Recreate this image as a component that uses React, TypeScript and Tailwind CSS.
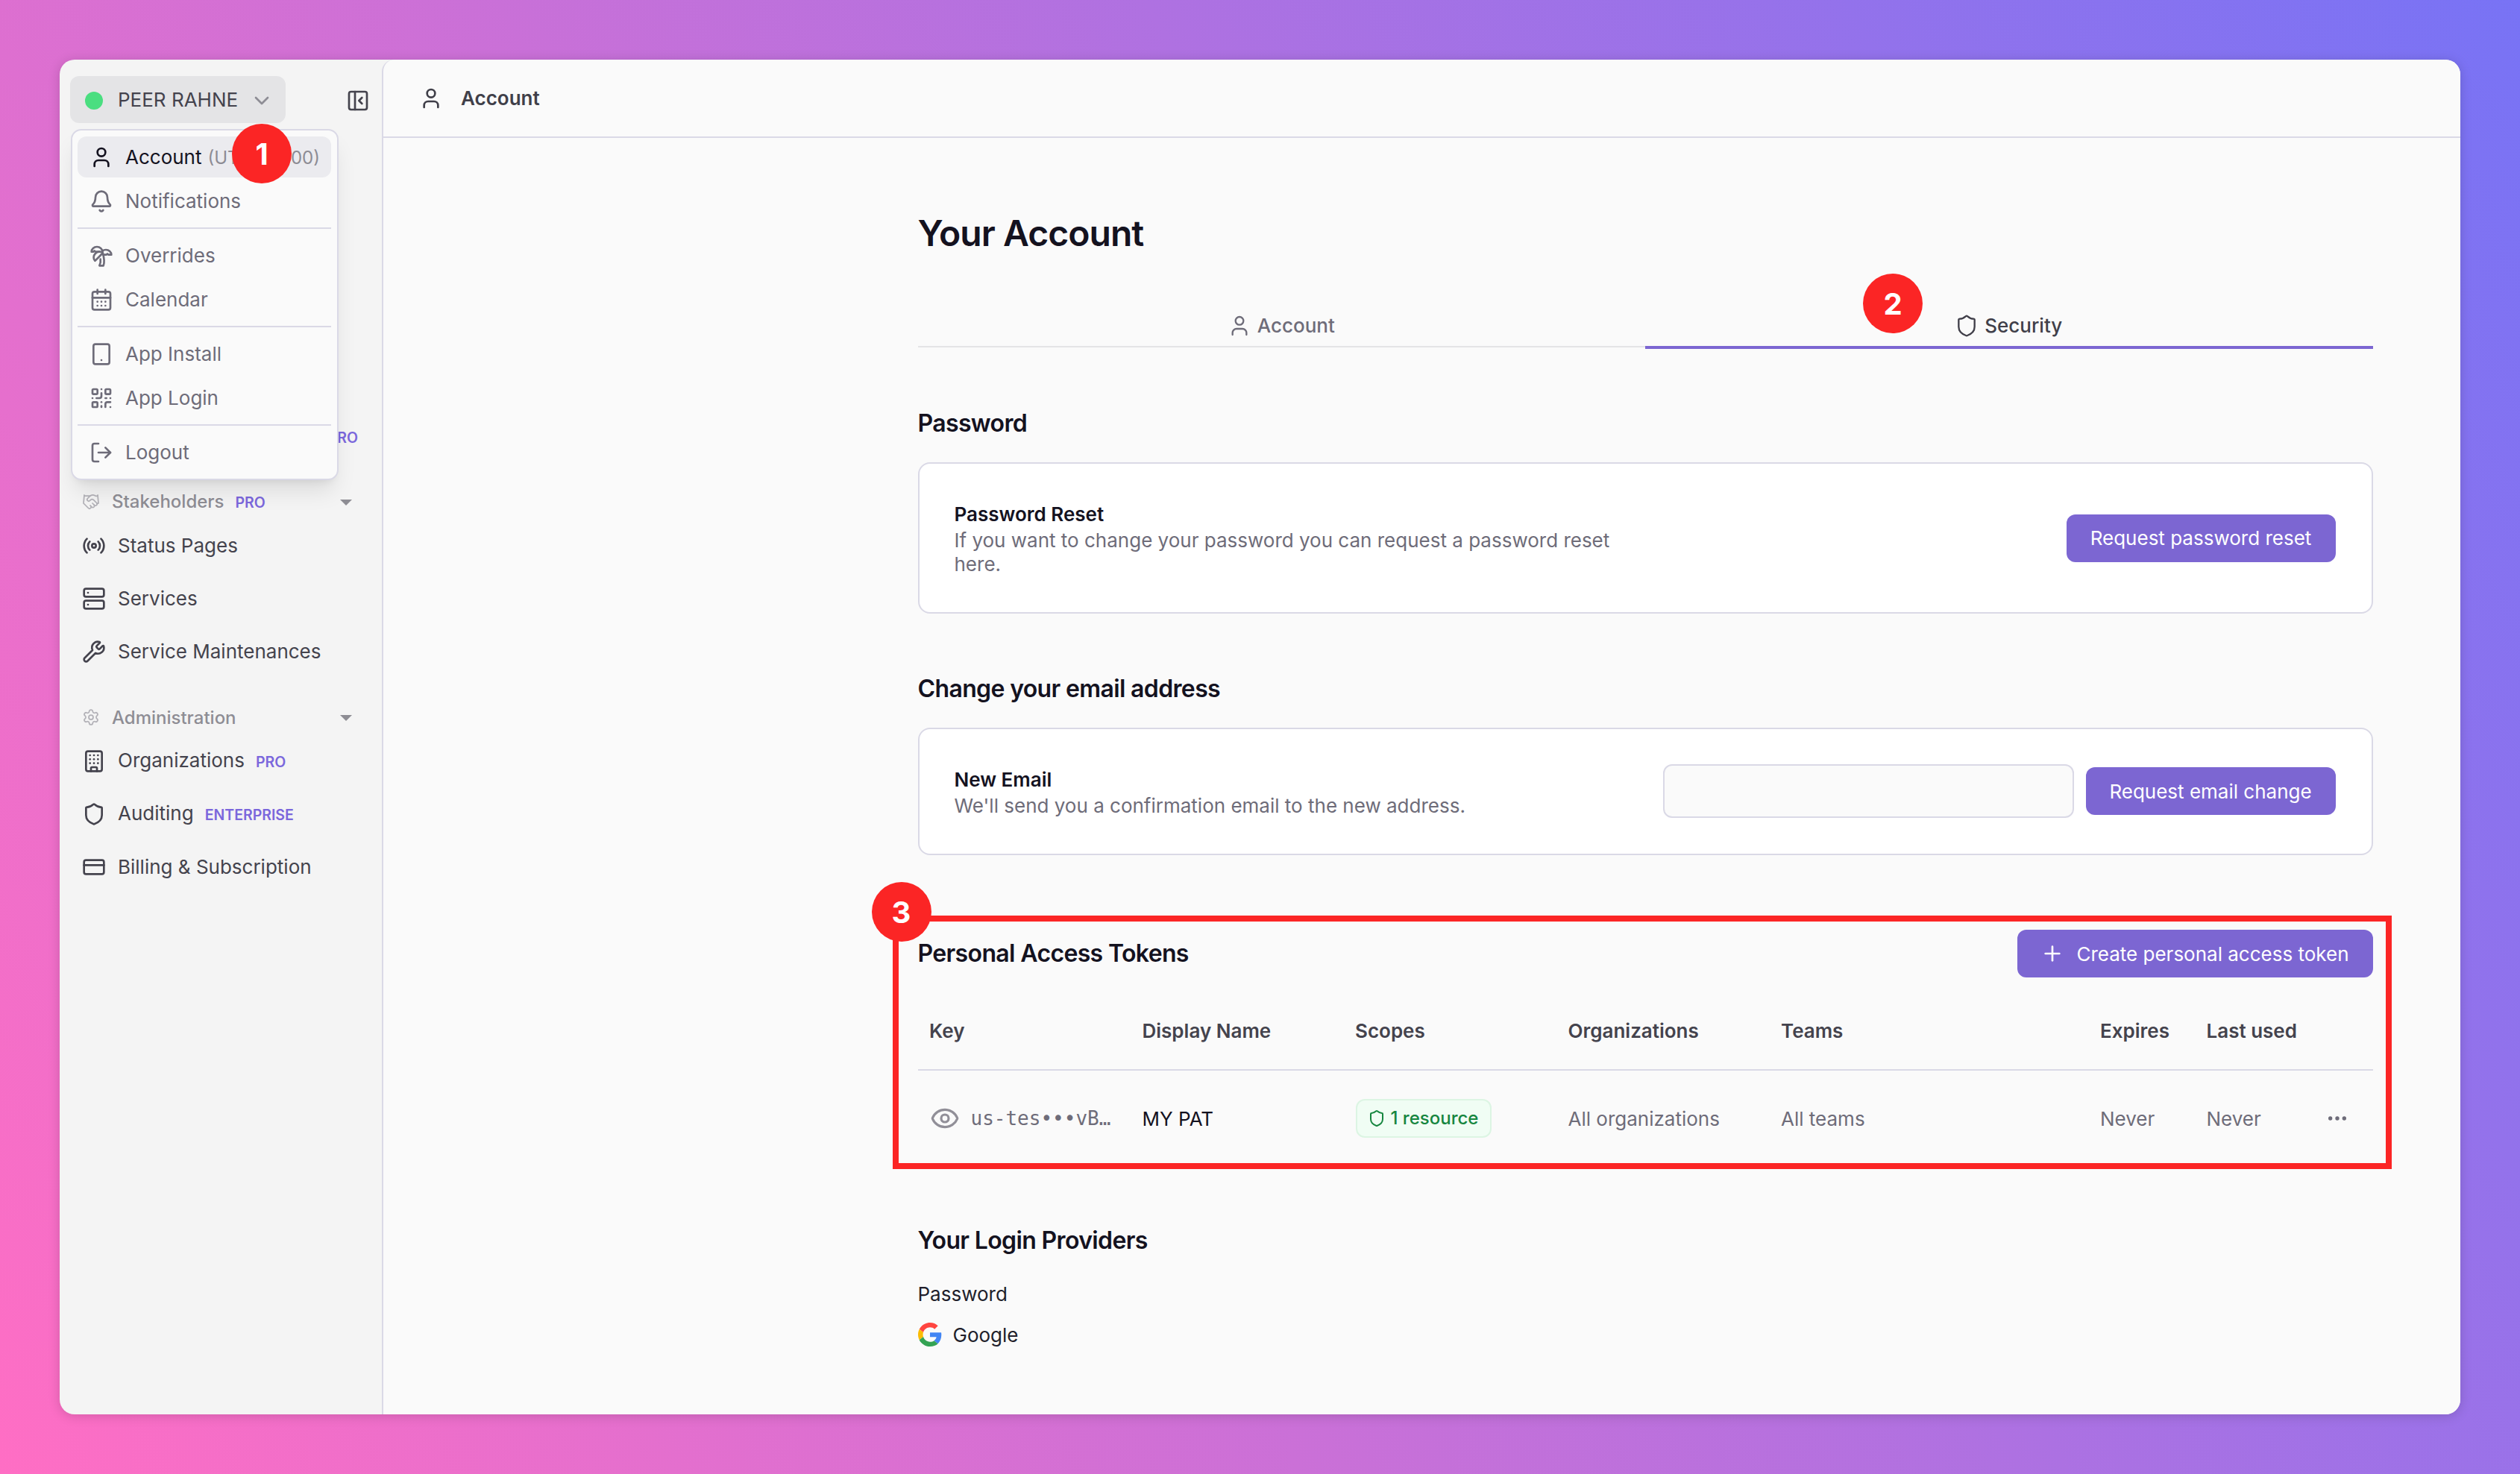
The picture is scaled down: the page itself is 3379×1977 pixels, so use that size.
import React from "react";
import {
  Bell,
  Building,
  CalendarDays,
  ChevronDown,
  CreditCard,
  Ellipsis,
  Eye,
  Handshake,
  LogOut,
  PanelLeftClose,
  Plus,
  QrCode,
  Radio,
  Server,
  Settings,
  Shield,
  Tablet,
  TreePalm,
  User,
  Wrench,
  type LucideIcon,
} from "lucide-react";

const STROKE = 2;

function Step({ n, className }: { n: number; className: string }) {
  return (
    <div
      className={`absolute z-30 flex size-20 items-center justify-center rounded-full bg-[#fb2525] pt-[2px] text-[40px] leading-none font-bold text-white ${className}`}
    >
      {n}
    </div>
  );
}

function Tag({ children }: { children: string }) {
  return <span className="ml-[15px] text-[19.5px] font-semibold text-[#7b67dc]">{children}</span>;
}

function MenuItem({ icon: Icon, label, hint, active }: { icon: LucideIcon; label: string; hint?: string; active?: boolean }) {
  return (
    <div
      className={`flex h-[55px] items-center gap-4 rounded-[12px] px-4 ${active ? "bg-[#ebebef] text-[#14121f]" : "text-[#6e6c79]"}`}
    >
      <Icon size={32} strokeWidth={STROKE} className="shrink-0" />
      <div className="flex items-baseline pt-[2px] whitespace-nowrap">
        <span>{label}</span>
        {hint && <span className="ml-[8px] text-[24px] text-[#8d8c94]">{hint}</span>}
      </div>
    </div>
  );
}

function MenuRule() {
  return <div className="my-1 h-[2px] bg-[#dad9e6]" />;
}

function UserMenu() {
  return (
    <div className="absolute top-[71px] left-px z-20 flex w-[359px] flex-col gap-1 rounded-[14px] border-2 border-[#dad9e6] bg-[#fafafa] py-2 pr-2 pl-[7px] shadow-[0_20px_30px_-6px_rgba(0,0,0,0.1),0_8px_12px_-8px_rgba(0,0,0,0.1)]">
      <MenuItem icon={User} label="Account" hint="(UTC+02:00)" active />
      <MenuItem icon={Bell} label="Notifications" />
      <MenuRule />
      <MenuItem icon={TreePalm} label="Overrides" />
      <MenuItem icon={CalendarDays} label="Calendar" />
      <MenuRule />
      <MenuItem icon={Tablet} label="App Install" />
      <MenuItem icon={QrCode} label="App Login" />
      <MenuRule />
      <MenuItem icon={LogOut} label="Logout" />
    </div>
  );
}

function NavGroup({ icon: Icon, label, tag }: { icon: LucideIcon; label: string; tag?: string }) {
  return (
    <div className="flex h-[46px] items-center pr-[40px] pl-[30px] text-[#8e8d94]">
      <Icon size={24} strokeWidth={1.75} className="mr-4 text-[#b3b2b8]" />
      <div className="flex items-baseline pt-[2px]">
        <span className="text-[24px] font-medium">{label}</span>
        {tag && <Tag>{tag}</Tag>}
      </div>
      <div className="mt-px ml-auto h-0 w-0 border-x-[8px] border-t-[8px] border-x-transparent border-t-[#8e8d94]" />
    </div>
  );
}

function NavItem({ icon: Icon, label, tag }: { icon: LucideIcon; label: string; tag?: string }) {
  return (
    <div className="flex h-[71px] items-center gap-4 pl-[30px] text-[#44434d]">
      <Icon size={32} strokeWidth={STROKE} />
      <div className="flex items-baseline pt-[2px]">
        <span>{label}</span>
        {tag && <Tag>{tag}</Tag>}
      </div>
    </div>
  );
}

function Sidebar() {
  return (
    <aside className="flex w-[432px] shrink-0 flex-col pt-[22px]">
      <div className="flex items-center justify-between pr-4 pl-[14px]">
        <div className="relative">
          <div className="flex h-[63px] w-[289px] items-center justify-between rounded-[12px] bg-[#e4e4e6] px-4 text-[#44434d]">
            <div className="flex items-center gap-[20px] pl-1">
              <span className="mt-[3px] size-6 rounded-full bg-[#4ade80]" />
              <span className="pt-[2px]">PEER RAHNE</span>
            </div>
            <ChevronDown size={32} strokeWidth={STROKE} className="mt-[2px] text-[#8e8d95]" />
          </div>
          <UserMenu />
          <Step n={1} className="top-[64px] left-[217px]" />
        </div>
        <PanelLeftClose size={32} strokeWidth={STROKE} className="mt-[2px] text-[#44434d]" />
      </div>

      <nav className="mt-[386px] flex flex-col">
        <div className="mb-[28px] flex h-[71px] items-center justify-end pt-[2px] pr-[32px]">
          <Tag>PRO</Tag>
        </div>
        <NavGroup icon={Handshake} label="Stakeholders" tag="PRO" />
        <NavItem icon={Radio} label="Status Pages" />
        <NavItem icon={Server} label="Services" />
        <NavItem icon={Wrench} label="Service Maintenances" />
        <div className="h-[30px]" />
        <NavGroup icon={Settings} label="Administration" />
        <NavItem icon={Building} label="Organizations" tag="PRO" />
        <NavItem icon={Shield} label="Auditing" tag="ENTERPRISE" />
        <NavItem icon={CreditCard} label="Billing & Subscription" />
      </nav>
    </aside>
  );
}

function Heading({ children, className = "" }: { children: string; className?: string }) {
  return (
    <h2 className={`text-[32px] leading-[40px] font-semibold tracking-[-0.02em] text-[#14121f] ${className}`}>{children}</h2>
  );
}

function Button({ children, className }: { children: React.ReactNode; className: string }) {
  return (
    <button
      className={`flex h-16 shrink-0 items-center justify-center gap-4 rounded-[12px] bg-[#7c66d2] whitespace-nowrap text-white ${className}`}
    >
      {children}
    </button>
  );
}

function Card({ title, text, children, className }: { title: string; text: string; children: React.ReactNode; className: string }) {
  return (
    <div className={`flex items-center justify-between rounded-[16px] border-2 border-[#dad9e6] bg-white pr-12 pl-[47px] ${className}`}>
      <div className="flex w-[900px] flex-col gap-[2px] pt-[5px] leading-[32.5px]">
        <span className="font-semibold text-[#14121f]">{title}</span>
        <span className="text-[#6e6c79]">{text}</span>
      </div>
      <div className="flex items-center gap-4">{children}</div>
    </div>
  );
}

const COLS = "grid grid-cols-[285.5px_285.5px_285.5px_285.5px_428px_142.5px_1fr_96px] items-center";

function Tokens() {
  return (
    <section className="relative mt-[100px] flex flex-col">
      <div className="flex h-16 items-center justify-between">
        <Heading>Personal Access Tokens</Heading>
        <Button className="w-[477px]">
          <Plus size={32} strokeWidth={STROKE} />
          <span className="pt-[2px]">Create personal access token</span>
        </Button>
      </div>
      <div className={`mt-[21px] h-[104px] border-b-2 border-[#dad9e6] font-semibold text-[#44434d] ${COLS} *:pl-[15.5px]`}>
        <span>Key</span>
        <span>Display Name</span>
        <span>Scopes</span>
        <span>Organizations</span>
        <span>Teams</span>
        <span>Expires</span>
        <span>Last used</span>
        <span />
      </div>
      <div className={`h-[128px] text-[#6e6c79] ${COLS}`}>
        <div className="flex items-center gap-[15px] pl-4">
          <Eye size={40} strokeWidth={1.9} className="shrink-0 text-[#918f98]" />
          <span className="whitespace-nowrap font-['DejaVu_Sans_Mono',monospace]">us-tes•••vB…</span>
        </div>
        <span className="pt-[2px] pl-[15.5px] text-[#14121f]">MY PAT</span>
        <div className="pl-4">
          <div className="flex h-[52px] w-[182px] items-center gap-[7px] rounded-[12px] border-2 border-[#dcf5e3] bg-[#f0fdf4] pl-[14px] text-[24px] font-medium whitespace-nowrap text-[#16863f]">
            <Shield size={24} strokeWidth={STROKE} className="shrink-0" />
            <span>1 resource</span>
          </div>
        </div>
        <span className="pt-[2px] pl-[15.5px]">All organizations</span>
        <span className="pt-[2px] pl-[15.5px]">All teams</span>
        <span className="pt-[2px] pl-[15.5px]">Never</span>
        <span className="pt-[2px] pl-[15.5px]">Never</span>
        <Ellipsis size={32} strokeWidth={2} className="justify-self-center" />
      </div>
      <div className="absolute -top-[19px] -right-[25px] -bottom-[4px] -left-[34px] z-20 border-8 border-[#fb2525]" />
      <Step n={3} className="-top-[64px] -left-[62px]" />
    </section>
  );
}

function GoogleLogo() {
  return (
    <svg viewBox="0 0 48 48" className="size-8">
      <path fill="#ff4540" d="M24 9.5c3.54 0 6.71 1.22 9.21 3.6l6.85-6.85C35.9 2.38 30.47 0 24 0 14.62 0 6.51 5.38 2.56 13.22l7.98 6.19C12.43 13.72 17.74 9.5 24 9.5z" />
      <path fill="#4285f4" d="M46.98 24.55c0-1.57-.15-3.09-.38-4.55H24v9.02h12.94c-.58 2.96-2.26 5.48-4.78 7.18l7.73 6c4.51-4.18 7.09-10.36 7.09-17.65z" />
      <path fill="#fbbc05" d="M10.53 28.59c-.48-1.45-.76-2.99-.76-4.59s.27-3.14.76-4.59l-7.98-6.19C.92 16.46 0 20.12 0 24c0 3.88.92 7.54 2.56 10.78l7.97-6.19z" />
      <path fill="#34a353" d="M24 48c6.48 0 11.93-2.13 15.89-5.81l-7.73-6c-2.15 1.45-4.92 2.3-8.16 2.3-6.26 0-11.57-4.22-13.47-9.91l-7.98 6.19C6.51 42.62 14.62 48 24 48z" />
    </svg>
  );
}

function Page() {
  return (
    <main className="flex grow flex-col overflow-hidden rounded-tl-[16px] border-l-2 border-[#dad9e6] bg-[#fafafa]">
      <header className="flex h-[105px] shrink-0 items-center gap-6 border-b-2 border-[#dad9e6] pl-12 font-semibold text-[#403f49]">
        <User size={32} strokeWidth={STROKE} />
        <span className="pt-[2px]">Account</span>
      </header>
      <div className="ml-[716.5px] flex w-[1951px] flex-col pt-[99.5px]">
        <h1 className="text-[48px] leading-[56px] font-semibold tracking-[-0.02em] text-[#14121f]">Your Account</h1>

        <div className="mt-[68.5px] grid h-[59px] grid-cols-2 items-start">
          <div className="flex h-[57px] items-center justify-center gap-[8px] border-b-2 border-[#e4e4e6] pr-px font-medium text-[#6e6c79]">
            <User size={32} strokeWidth={1.75} />
            <span className="pt-[2px]">Account</span>
          </div>
          <div className="relative flex h-[59px] items-center justify-center gap-[8px] border-b-4 border-[#7c66d2] pr-px font-medium text-[#403f49]">
            <Shield size={32} strokeWidth={1.75} />
            <span className="pt-[2px]">Security</span>
            <Step n={2} className="-top-[42px] left-[292px]" />
          </div>
        </div>

        <Heading className="mt-[79.5px] mb-[32.5px]">Password</Heading>
        <Card
          title="Password Reset"
          text="If you want to change your password you can request a password reset here."
          className="h-[203px]"
        >
          <Button className="w-[361px]">
            <span className="pt-[2px]">Request password reset</span>
          </Button>
        </Card>

        <Heading className="mt-[81px] mb-[31.5px]">Change your email address</Heading>
        <Card title="New Email" text="We'll send you a confirmation email to the new address." className="h-[171.5px]">
          <input className="h-[72px] w-[551px] rounded-[12px] border-2 border-[#dad9e6] bg-[#fafafa]" />
          <Button className="w-[335px]">
            <span className="pt-[2px]">Request email change</span>
          </Button>
        </Card>

        <Tokens />

        <Heading className="mt-[79.5px]">Your Login Providers</Heading>
        <div className="mt-[31.5px] flex flex-col gap-[15px] text-[#211f2b]">
          <div className="flex h-10 items-center pt-[2px]">Password</div>
          <div className="flex h-10 items-center gap-[15px]">
            <GoogleLogo />
            <span className="pt-[2px]">Google</span>
          </div>
        </div>
      </div>
    </main>
  );
}

export default function App() {
  return (
    <div className="h-[1977px] w-[3379px] overflow-hidden bg-[linear-gradient(60deg,#ff6ec4,#7873f5)] p-20 font-['Inter',sans-serif] text-[26px] leading-[32.5px]">
      <div className="flex h-full overflow-hidden rounded-[20px] bg-[#f4f4f4] shadow-[0_2px_16px_rgba(0,0,0,0.16)]">
        <Sidebar />
        <Page />
      </div>
    </div>
  );
}
